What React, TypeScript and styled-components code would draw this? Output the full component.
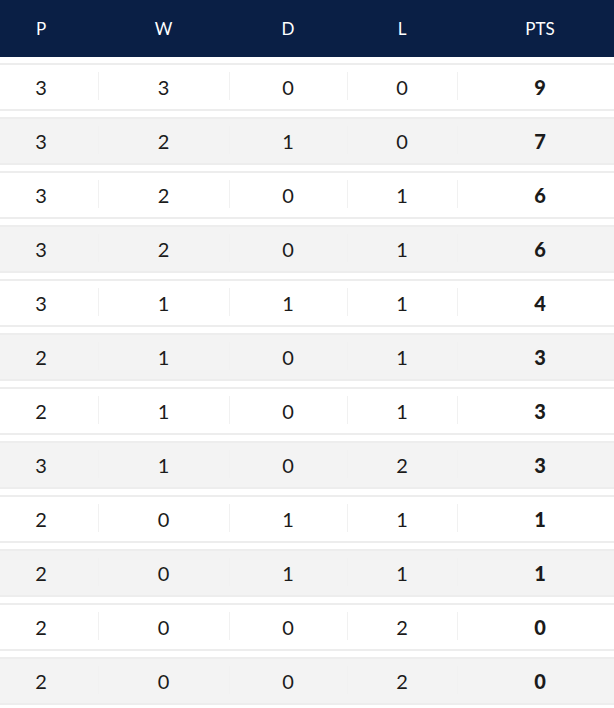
import React from "react";
import styled, { createGlobalStyle } from "styled-components";

const GlobalStyle = createGlobalStyle`
  body {
    margin: 0;
    background: #ffffff;
    font-family: Lato, "Open Sans", sans-serif;
  }
`;

const rows = [
  [3, 3, 0, 0, 9],
  [3, 2, 1, 0, 7],
  [3, 2, 0, 1, 6],
  [3, 2, 0, 1, 6],
  [3, 1, 1, 1, 4],
  [2, 1, 0, 1, 3],
  [2, 1, 0, 1, 3],
  [3, 1, 0, 2, 3],
  [2, 0, 1, 1, 1],
  [2, 0, 1, 1, 1],
  [2, 0, 0, 2, 0],
  [2, 0, 0, 2, 0],
];

const heads = ["P", "W", "D", "L", "PTS"];

const App = () => {
  return (
    <Wrapper>
      <GlobalStyle />
      <HeadRow>
        {heads.map((h) => (
          <HeadCell key={h}>{h}</HeadCell>
        ))}
      </HeadRow>
      {rows.map((r, i) => (
        <Row key={i} $alt={i % 2 === 1}>
          {r.map((v, j) => (
            <Cell key={j} $bold={j === 4} $divider={j > 0}>
              {v}
            </Cell>
          ))}
        </Row>
      ))}
    </Wrapper>
  );
};

const columns = "98px 131px 118px 110px 1fr";

const Wrapper = styled.main`
  display: flex;
  flex-direction: column;
  gap: 6px;
  width: 614px;
`;

const HeadRow = styled.div`
  display: grid;
  grid-template-columns: ${columns};
  height: 57px;
  background: #0a1f45;
  color: #ffffff;
  font-size: 17px;
`;

const HeadCell = styled.div`
  display: flex;
  align-items: center;
  justify-content: center;

  &:first-child {
    padding-right: 16px;
  }
  &:last-child {
    padding-left: 9px;
  }
`;

const Row = styled.div<{ $alt: boolean }>`
  display: grid;
  grid-template-columns: ${columns};
  height: 44px;
  border-top: 2px solid #ededed;
  border-bottom: 2px solid #ededed;
  background: ${(p) => (p.$alt ? "#f3f3f3" : "#ffffff")};
  color: #1b1b1b;
  font-size: 20px;
`;

const Cell = styled.div<{ $bold: boolean; $divider: boolean }>`
  position: relative;
  display: flex;
  align-items: center;
  justify-content: center;
  font-weight: ${(p) => (p.$bold ? 900 : 400)};

  &::before {
    content: "";
    display: ${(p) => (p.$divider ? "block" : "none")};
    position: absolute;
    left: 0;
    top: 7px;
    bottom: 9px;
    width: 1px;
    background: #f1f1f1;
  }

  &:first-child {
    padding-right: 16px;
  }
  &:last-child {
    padding-left: 9px;
  }
`;

export default App;
